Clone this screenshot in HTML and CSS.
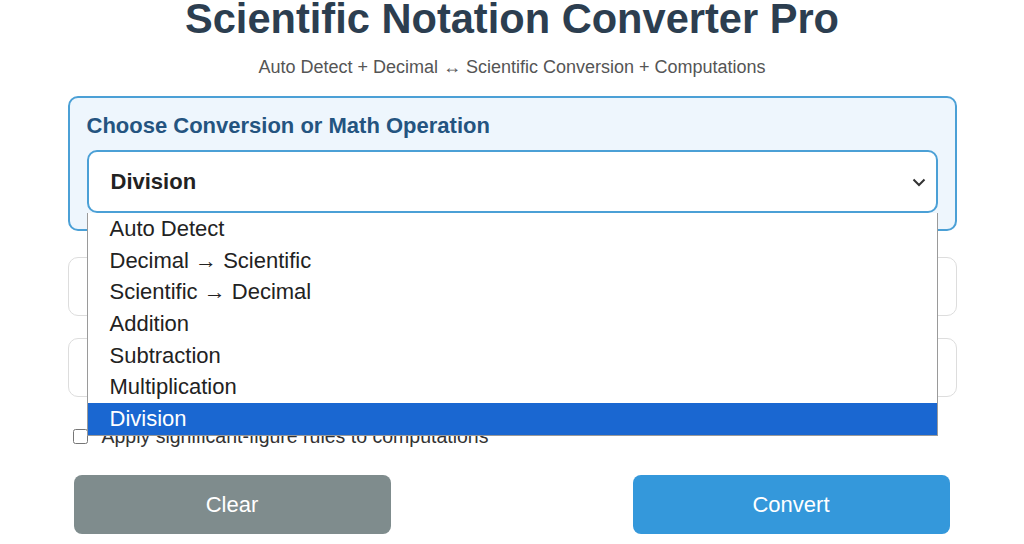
FILE: index.html
```html
<!DOCTYPE html>
<html lang="en">
<head>
    <meta charset="UTF-8">
    <meta name="viewport" content="width=device-width, initial-scale=1.0">
    <title>Scientific Notation Converter Pro</title>
    <link rel="stylesheet" href="styles.css">
</head>
<body>
    <div class="container">
        <h1 class="title">Scientific Notation Converter Pro</h1>
        <div class="subtitle">Auto Detect + Decimal ↔ Scientific Conversion + Computations</div>

        <div class="mode-panel">
            <div class="mode-label">Choose Conversion or Math Operation</div>
            <div class="select-wrap">
                <div class="select-box">
                    <span class="select-value">Division</span>
                    <svg class="chevron" width="14" height="9" viewBox="0 0 14 9">
                        <path d="M1.5 1.5 L7 7 L12.5 1.5" fill="none" stroke="#333" stroke-width="2"/>
                    </svg>
                </div>
                <!-- open option list -->
                <ul class="option-list">
                    <li class="option">Auto Detect</li>
                    <li class="option">Decimal → Scientific</li>
                    <li class="option">Scientific → Decimal</li>
                    <li class="option">Addition</li>
                    <li class="option">Subtraction</li>
                    <li class="option">Multiplication</li>
                    <li class="option selected">Division</li>
                </ul>
            </div>
        </div>

        <div class="number-input"></div>
        <div class="number-input second"></div>

        <label class="sigfig-row">
            <input type="checkbox" class="sigfig-check">
            <span>Apply significant-figure rules to computations</span>
        </label>

        <div class="button-row">
            <button class="btn btn-clear">Clear</button>
            <button class="btn btn-convert">Convert</button>
        </div>
    </div>
</body>
</html>
```

FILE: styles.css
```css
* {
    margin: 0;
    padding: 0;
    box-sizing: border-box;
}

body {
    font-family: "Liberation Sans", Arial, sans-serif;
    background: #fff;
    color: #333;
    overflow: hidden;
}

.container {
    width: 889px;
    margin: 0 auto;
}

.title {
    font-size: 41.6px;
    line-height: 38px;
    font-weight: bold;
    color: #2c3e50;
    text-align: center;
}

.subtitle {
    font-size: 18px;
    line-height: 21px;
    color: #555;
    text-align: center;
    margin-top: 19px;
}

.mode-panel {
    margin-top: 18px;
    background: #eef6fd;
    border: 2px solid #4ba0d6;
    border-radius: 10px;
    padding: 15px 17px 16px;
}

.mode-label {
    font-size: 22px;
    line-height: 26px;
    font-weight: bold;
    color: #245480;
    margin-bottom: 11px;
}

.select-wrap {
    position: relative;
}

.select-box {
    height: 63px;
    background: #fff;
    border: 2px solid #4ba0d6;
    border-radius: 10px;
    padding: 0 10px 0 22px;
    display: flex;
    align-items: center;
    justify-content: space-between;
}

.select-value {
    font-size: 22px;
    font-weight: bold;
    color: #222;
}

.chevron {
    margin-top: 1px;
}

.option-list {
    position: absolute;
    top: 100%;
    left: 0;
    right: 0;
    z-index: 10;
    list-style: none;
    background: #fff;
    border: 1px solid #9a9a9a;
    border-top: none;
}

.option {
    height: 31.7px;
    line-height: 31.7px;
    padding-left: 22px;
    font-size: 22px;
    color: #222;
}

.option.selected {
    background: #1a67d1;
    color: #fff;
}

.number-input {
    height: 59px;
    border: 1px solid #ddd;
    border-radius: 10px;
    margin-top: 26px;
}

.number-input.second {
    margin-top: 22px;
}

.sigfig-row {
    display: flex;
    align-items: center;
    gap: 14px;
    margin-top: 28px;
    padding-left: 5px;
    font-size: 19.5px;
    line-height: 22px;
    color: #333;
}

.sigfig-check {
    width: 15px;
    height: 15px;
    margin: 0;
}

.button-row {
    display: flex;
    justify-content: space-between;
    padding: 0 7px 0 6px;
    margin-top: 28px;
}

.btn {
    width: 317px;
    height: 59px;
    border: none;
    border-radius: 8px;
    font-family: inherit;
    font-size: 22px;
    color: #fff;
    cursor: pointer;
}

.btn-clear {
    background: #7f8c8d;
}

.btn-convert {
    background: #3498db;
}
```
